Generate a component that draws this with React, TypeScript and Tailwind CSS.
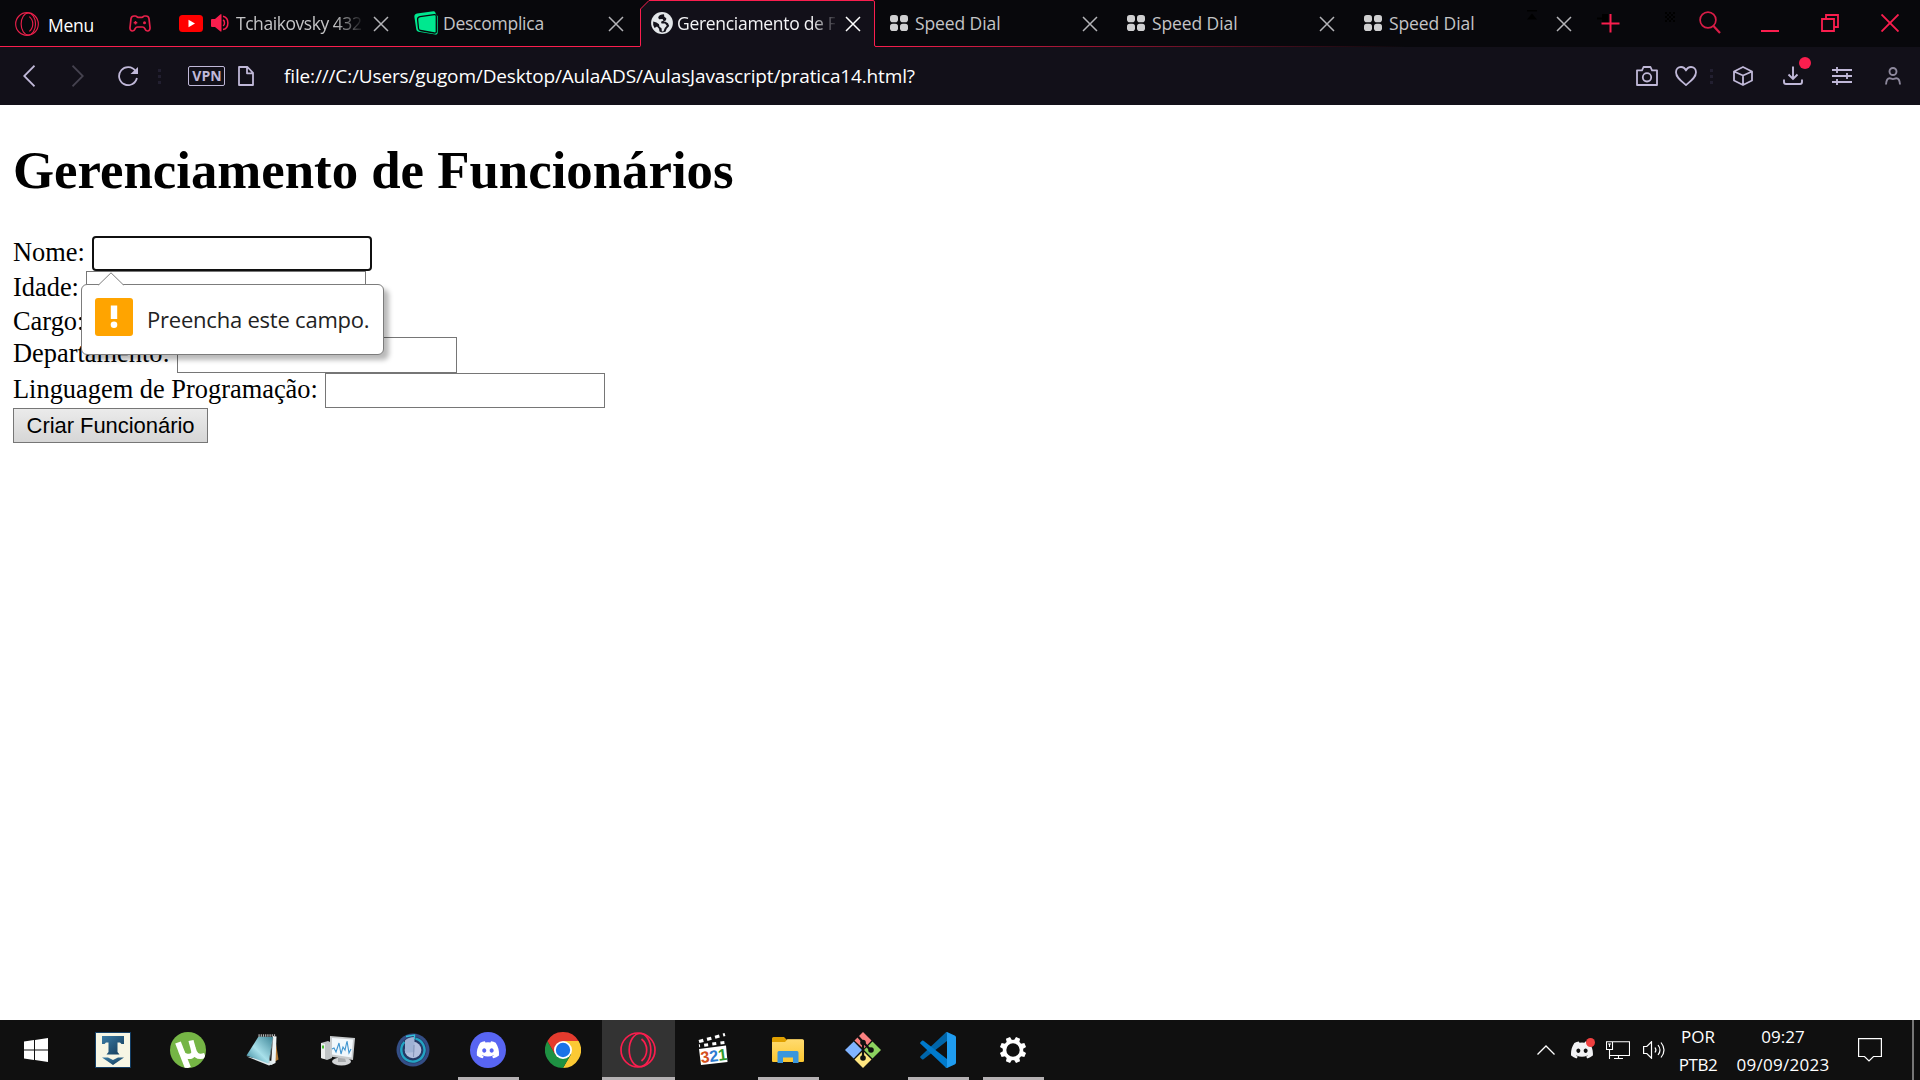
import React from "react";

type P = { className?: string };

const Cross = ({ className = "" }: P) => (
  <svg viewBox="0 0 16 16" className={`size-4 shrink-0 ${className}`} fill="none" stroke="currentColor" strokeWidth="1.5">
    <path d="M1 1 15 15M15 1 1 15" />
  </svg>
);

const OperaRings = ({ className = "" }: P) => (
  <svg viewBox="0 0 36 36" className={`shrink-0 ${className}`} fill="none" stroke="currentColor" strokeWidth="1.7">
    <circle cx="18" cy="18" r="17" />
    <ellipse cx="20" cy="18" rx="10.800" ry="16.500" />
    <path d="M21.500 7c3 2.500 5.200 6 5.200 11s-2.200 8.500-5.200 11" />
  </svg>
);

const Gamepad = () => (
  <svg viewBox="0 0 22 17" className="h-[17px] w-[22px] shrink-0" fill="none" stroke="#e8204a" strokeWidth="1.7" strokeLinejoin="round">
    <path d="M6.500 1 5 1C3.300 1 2.300 2 2 3.600L1 12.500C.8 14.600 1.800 16 3.500 16 5 16 5.600 15 6.200 13.600 6.800 12.200 7.500 12 8.500 12h5c1 0 1.700.2 2.300 1.600C16.400 15 17 16 18.500 16c1.700 0 2.700-1.400 2.500-3.500L20 3.600C19.700 2 18.700 1 17 1h-1.500C14.200 1 14.200 2.300 13 2.300H9C7.800 2.300 7.800 1 6.500 1Z" />
    <circle cx="15.500" cy="7.800" r="1.500" fill="#e8204a" stroke="none" />
    <path d="M6.500 6v3.600M4.700 7.800h3.600" strokeWidth="1.500" />
  </svg>
);

const YouTube = () => (
  <svg viewBox="0 0 24 17" className="h-[17px] w-6 shrink-0">
    <rect width="24" height="17" rx="3.500" fill="#f00" />
    <path d="M9.500 4.800 16 8.500 9.500 12.200Z" fill="#fff" />
  </svg>
);

const TabSpeaker = () => (
  <svg viewBox="0 0 18 18" className="ml-2 size-[18px] shrink-0" fill="none" stroke="#fa1e4e" strokeWidth="1.500">
    <path d="M0 6q0-1 1-1H4L9.500.3h1V17.500h-1L4 13H1q-1 0-1-1Z" fill="#fa1e4e" stroke="none" />
    <path d="M12 6c2 1 2 4.800 0 5.800M12 2.300c6.500 1.500 6.500 11.700 0 13.200" />
  </svg>
);

const Descomplica = () => (
  <svg viewBox="0 0 24 24" className="size-6 shrink-0">
    <path d="M3 2.500 19.500.2Q21.300 0 21.500 2L22 3.500 23.700 5V21.500Q23.700 24 21.300 23.600L4.500 20.800Q2.600 20.500 2.300 18.500L.4 6Q0 3 3 2.500Z" fill="#00e88f" />
    <path d="M6 5.700 20.300 3.600Q22.300 3.400 22.300 5.400V20.400Q22.300 22.400 20.300 22L6.500 19.500Q4.700 19.200 4.500 17.500L3.600 8.500Q3.400 6.200 6 5.700Z" fill="none" stroke="#08080c" strokeWidth="1.300" />
  </svg>
);

const Globe = () => (
  <svg viewBox="0 0 22 22" className="size-[22px] shrink-0">
    <circle cx="11" cy="11" r="10.900" fill="#e4e7ea" />
    <path d="M13 2.300C10 2.300 7.800 3.500 7.200 5.500L8 7.300 11.500 7l1 1.500-2.500 1.300.5 1.600 3.500.2 1.800 2.100-2 2.300-1.300 3.300-1.600.2-.4-3.200-2-1.500-.5-2.600L5.500 10.500 2.200 9.500Q1.500 13 3.500 16L6 14.500l2 2.200.5 2.900 2.500.8 3.500-.7 1.200-3 2.500-2.700L17 11.300l-2.500-1.500-2-.3 2.500-1.200.3-2-2-1.500Z" fill="#14131c" />
  </svg>
);

const Dial = () => (
  <svg viewBox="0 0 18 16" className="h-4 w-[18px] shrink-0" fill="#cfcfd1">
    <rect width="8" height="7.200" rx="2.800" />
    <rect x="10" width="8" height="7.200" rx="2.800" />
    <rect y="8.800" width="8" height="7.200" rx="2.800" />
    <rect x="10" y="8.800" width="8" height="7.200" rx="2.800" />
  </svg>
);

const Dots = ({ className = "" }: P) => (
  <div className={`flex w-[3px] shrink-0 flex-col gap-[3px] ${className}`}>
    <i className="size-[3px] bg-[#221f30]" />
    <i className="size-[3px] bg-[#221f30]" />
    <i className="size-[3px] bg-[#221f30]" />
  </div>
);

function SpeedDialTab({ faint }: { faint?: boolean }) {
  return (
    <div className="flex h-[46px] w-[237px] shrink-0 items-center">
      <Dial />
      <span className="ml-[7px] w-[88px] leading-[46px] tracking-[-0.1px] whitespace-nowrap">Speed Dial</span>
      <div className="flex w-[79px] justify-end pr-[19px] pb-4">
        {faint && (
          <svg viewBox="0 0 10 10" className="size-[10px]"><path d="M0 0h10v1.500H0ZM0 9.500 5 3.500l5 6Z" fill="#000" /></svg>
        )}
      </div>
      <Cross className="mt-[2px] text-[#b4b4b8]" />
    </div>
  );
}

function TabBar() {
  return (
    <header className="relative flex h-[47px] bg-[#08080c] font-['Open_Sans',sans-serif] text-[17.5px] text-[#c4c4c6]">
      <div className="absolute bottom-0 left-0 h-px w-[1450px] bg-linear-to-r from-[#fa1e4e] from-60% to-transparent to-97%" />
      <div className="flex h-[46px] w-[179px] shrink-0 items-center pl-[15px]">
        <OperaRings className="mt-[2px] size-6 text-[#e8204a]" />
        <span className="ml-[9px] w-[81px] pt-[3px] leading-[46px] tracking-[-0.3px] text-white">Menu</span>
        <Gamepad />
      </div>
      <div className="flex h-[46px] w-[235px] shrink-0 items-center">
        <YouTube />
        <TabSpeaker />
        <span className="ml-[7px] w-[130px] leading-[46px] tracking-[-0.45px] whitespace-nowrap [mask-image:linear-gradient(to_right,black_76%,transparent_99%)]">Tchaikovsky 432</span>
        <Cross className="mt-[2px] ml-[7px] text-[#b4b4b8]" />
      </div>
      <div className="flex h-[46px] w-[226px] shrink-0 items-center">
        <Descomplica />
        <span className="ml-[5px] w-[165px] leading-[46px] tracking-[-0.25px]">Descomplica</span>
        <Cross className="mt-[2px] text-[#b4b4b8]" />
      </div>
      <div className="relative h-[47px] w-[250px] shrink-0">
        <svg viewBox="0 0 236 47" className="absolute top-0 left-0 h-[47px] w-[236px]">
          <path d="M0 47Q.5 46.500.5 45V9L9 .5H233Q234.500.5 234.500 2V45L236 47Z" fill="#121019" />
          <path d="M-1 46.500Q.5 46.500.5 45V9L9 .5H233Q234.500.5 234.500 2V45Q234.500 46.500 236 46.500" fill="none" stroke="#fa1e4e" />
        </svg>
        <div className="relative flex h-[46px] items-center pl-[11px]">
          <Globe />
          <span className="ml-1 w-[158px] leading-[46px] tracking-[-0.3px] whitespace-nowrap text-[#f4f4f6] [mask-image:linear-gradient(to_right,black_85%,transparent_102%)]">Gerenciamento de F</span>
          <Cross className="mt-[2px] ml-[10px] text-white" />
        </div>
      </div>
      <SpeedDialTab />
      <SpeedDialTab />
      <SpeedDialTab faint />
      <div className="ml-[-5px] flex h-[46px] flex-1 items-center text-[#fa1e4e]">
        <svg viewBox="0 0 24 20" className="h-5 w-6 shrink-0" fill="none">
          <path d="M1 4.500h5V1h6v9H6V6.500H1Z" fill="#000" />
          <path d="M15 1.500V20M6 11h18" stroke="currentColor" strokeWidth="2" transform="translate(-.5 -.5)" />
        </svg>
        <svg viewBox="0 0 10 10" className="mt-[-13px] ml-[45px] size-[10px] shrink-0" fill="#000">
          <path d="M0 0h2v2H0ZM4 0h2v2H4ZM8 0h2v2H8ZM2 2h2v2H2ZM6 2h2v2H6ZM0 4h2v2H0ZM4 4h2v2H4ZM8 4h2v2H8ZM2 6h2v2H2ZM6 6h2v2H6ZM0 8h2v2H0ZM4 8h2v2H4ZM8 8h2v2H8Z" />
        </svg>
        <svg viewBox="0 0 22 23" className="mt-[-2px] ml-6 h-[23px] w-[22px] shrink-0" fill="none" stroke="#d81d47" strokeWidth="1.700">
          <circle cx="9" cy="9" r="7.900" />
          <path d="M14.500 15 21 22" strokeWidth="2.200" />
        </svg>
        <i className="mt-[16px] ml-10 h-[2px] w-[18px] bg-current" />
        <svg viewBox="0 0 18 18" className="ml-[42px] size-[18px] shrink-0" fill="none" stroke="currentColor" strokeWidth="1.800">
          <path d="M1 5h12v12H1ZM5 5V1h12v12h-4" />
        </svg>
        <svg viewBox="0 0 18 18" className="ml-[42px] size-[18px] shrink-0" fill="none" stroke="currentColor" strokeWidth="1.900">
          <path d="M.5.500 17.500 17.500M17.500.500.500 17.500" />
        </svg>
      </div>
    </header>
  );
}

function AddressBar() {
  return (
    <nav className="flex h-[58px] items-center bg-[#121019] text-[#c0b8d8]">
      <svg viewBox="0 0 12 22" className="ml-[23px] h-[22px] w-3 shrink-0" fill="none" stroke="currentColor" strokeWidth="1.800"><path d="M11.500.7 1.200 11l10.300 10.300" /></svg>
      <svg viewBox="0 0 12 22" className="ml-[37px] h-[22px] w-3 shrink-0" fill="none" stroke="#45424f" strokeWidth="1.800"><path d="M.5.7 10.800 11 .5 21.300" /></svg>
      <svg viewBox="0 0 20 20" className="ml-[34px] size-5 shrink-0" fill="none" stroke="currentColor" strokeWidth="1.800">
        <path d="M17.500 5A9 9 0 1 0 18.900 12" />
        <path d="M20 1v7h-7.500Z" fill="currentColor" stroke="none" />
      </svg>
      <Dots className="ml-5" />
      <div className="ml-[27px] flex h-5 w-[37px] shrink-0 items-center justify-center rounded-[2px] border border-[#c0b8d8] pl-px font-['Open_Sans',sans-serif] text-[14px] leading-none font-bold">VPN</div>
      <svg viewBox="0 0 16 20" className="ml-[13px] h-5 w-4 shrink-0" fill="none" stroke="currentColor" strokeWidth="1.800" strokeLinejoin="round">
        <path d="M1 1h8.500L15 6.800V19H1ZM9 1v6.300h6" />
      </svg>
      <span className="ml-[30px] w-[1352px] font-['Open_Sans',sans-serif] text-[19px] leading-[58px] tracking-[-0.15px] whitespace-nowrap text-white">file:///C:/Users/gugom/Desktop/AulaADS/AulasJavascript/pratica14.html?</span>
      <svg viewBox="0 0 22 20" className="h-5 w-[22px] shrink-0" fill="none" stroke="currentColor" strokeWidth="1.800" strokeLinejoin="round">
        <path d="M1 4.300h5L7.500 1h7L16 4.300h5V19H1Z" />
        <circle cx="11" cy="11.300" r="4.200" />
      </svg>
      <svg viewBox="0 0 22 20" className="ml-[17px] h-5 w-[22px] shrink-0" fill="none" stroke="currentColor" strokeWidth="1.800" strokeLinejoin="round">
        <path d="M11 19C6 14.800 1 11.500 1 6.300 1 3.200 3.200 1 6 1c2.200 0 4 1.200 5 3.500C12 2.200 13.800 1 16 1c2.800 0 5 2.200 5 5.300C21 11.500 16 14.800 11 19Z" />
      </svg>
      <Dots className="ml-[13px]" />
      <svg viewBox="0 0 20 20" className="ml-5 size-5 shrink-0" fill="none" stroke="currentColor" strokeWidth="1.800" strokeLinejoin="round">
        <path d="M10 1 19 5.500v9L10 19l-9-4.500v-9ZM1 5.500l9 4 9-4M10 9.500V19" />
      </svg>
      <div className="relative ml-[30px] h-5 w-5 shrink-0">
        <svg viewBox="0 0 20 20" className="size-5" fill="none" stroke="currentColor" strokeWidth="1.900">
          <path d="M10 .5v12M5.500 8.500 10 13l4.500-4.500M1 13.500V16q0 2 2 2h14q2 0 2-2v-2.500" />
        </svg>
        <i className="absolute top-[-9px] right-[-8px] size-3 rounded-full bg-[#fa1e4e]" />
      </div>
      <svg viewBox="0 0 20 18" className="ml-[29px] h-[18px] w-5 shrink-0" fill="none" stroke="currentColor" strokeWidth="1.800">
        <path d="M0 3h20M0 9h20M0 15h20M5 0v6M15 6v6M5 12v6" />
      </svg>
      <svg viewBox="0 0 16 18" className="ml-[33px] h-[18px] w-4 shrink-0" fill="none" stroke="#8d889c" strokeWidth="1.900">
        <circle cx="8" cy="4.500" r="3.500" />
        <path d="M1 17.500c.3-4.500 2-6.200 3.700-6.200 1.300 0 1.800.8 3.300.8s2-.8 3.300-.8c1.700 0 3.400 1.700 3.700 6.200" />
      </svg>
    </nav>
  );
}

function Page() {
  const field = "shrink-0 w-[280px] border border-[#767676] bg-white";
  return (
    <main className="h-[915px] bg-white pl-[13px] font-['Liberation_Serif',serif] text-[26.4px] leading-[33.4px] text-black">
      <h1 className="pt-[35px] text-[52.8px] leading-[60px] font-bold">Gerenciamento de Funcionários</h1>
      <form className="relative pt-9">
        <div className="flex h-[35px]">
          <label className="w-[79px]">Nome:</label>
          <div className="h-[35px] w-[280px] rounded-[4px] border-2 border-[#101010] bg-white" />
        </div>
        <div className="flex h-[35px]">
          <label className="w-[73px]">Idade:</label>
          <div className={`h-[35px] ${field}`} />
        </div>
        <div className="flex h-[31px]">
          <label className="w-[76px] leading-[31px]">Cargo:</label>
          <div className={`h-[31px] ${field}`} />
        </div>
        <div className="flex h-9">
          <label className="w-[164px]">Departamento:</label>
          <div className={`h-9 ${field}`} />
        </div>
        <div className="flex h-[35px]">
          <label className="w-[312px]">Linguagem de Programação:</label>
          <div className={`h-[35px] ${field}`} />
        </div>
        <button type="button" className="block h-[35px] w-[195px] border border-[#767676] bg-linear-to-b from-[#ebebeb] to-[#d6d6d6] text-center font-['Liberation_Sans',sans-serif] text-[22px] leading-[33px] tracking-[-0.05px] whitespace-nowrap">Criar Funcionário</button>

        <div className="absolute top-[84px] left-[68px] flex h-[71px] w-[303px] items-start rounded-md border border-[#7c7c7c] bg-white pt-[13px] pl-[13px] shadow-[5px_5px_5px_rgba(0,0,0,0.28)]">
          <svg viewBox="0 0 26 14" className="absolute top-[-13px] left-[16px] h-[14px] w-[26px]">
            <path d="M.5 13 13 .800 25.500 13V14H.5Z" fill="#fff" />
            <path d="M.5 13 13 .800 25.500 13" fill="none" stroke="#7c7c7c" />
          </svg>
          <svg viewBox="0 0 38 38" className="size-[38px] shrink-0">
            <rect width="38" height="38" rx="3" fill="#ffa400" />
            <rect x="15.800" y="7.500" width="6.400" height="13.500" fill="#fff" />
            <circle cx="19" cy="26.800" r="3.300" fill="#fff" />
          </svg>
          <span className="ml-[14px] font-['Open_Sans',sans-serif] text-[22px] leading-[42px] tracking-[-0.22px] whitespace-nowrap text-[#222]">Preencha este campo.</span>
        </div>
      </form>
    </main>
  );
}

const Transmission = () => (
  <svg viewBox="0 0 36 36" className="size-9">
    <defs><linearGradient id="tg" x1="0" x2="1" y1="0" y2="1"><stop offset="0" stopColor="#3c7da6" /><stop offset="1" stopColor="#123a58" /></linearGradient></defs>
    <rect x=".5" y=".5" width="35" height="35" fill="#f7f6e4" stroke="#143f66" />
    <path d="M7 4h22v8h-2.500l-1.500-1.500h-2.500V20l2 2.500H11.500l2-2.500V10.500H11L9.500 12H7Z" fill="url(#tg)" />
    <path d="M7 25.500h6l5 2.500 5-2.500h6L18 33Z" fill="url(#tg)" />
  </svg>
);

const UTorrent = () => (
  <svg viewBox="0 0 36 36" className="size-9">
    <clipPath id="utc"><circle cx="18" cy="18" r="18" /></clipPath>
    <circle cx="18" cy="18" r="18" fill="#75b545" />
    <g clipPath="url(#utc)" fill="none" stroke="#fff">
      <path d="M8 10.500 18 36" strokeWidth="6" />
      <path d="M11 19c2 6 10 7 12.500 3 1.200-2.500-1-7-2.500-13.500M23 16c1.500 6 4 10.500 12 7.500" strokeWidth="5.200" />
    </g>
  </svg>
);

const Notepad = () => (
  <svg viewBox="0 0 36 36" className="size-9">
    <defs><linearGradient id="ng" x1="0" x2="1" y1="1" y2="0"><stop offset="0" stopColor="#2c7d94" /><stop offset=".45" stopColor="#a8e0ea" /><stop offset="1" stopColor="#3d8597" /></linearGradient></defs>
    <path d="m30 5 3.500 22.500-5.500 3Z" fill="#b57b35" />
    <path d="m28 4 3.500.500L30.500 31 26 33Z" fill="#eef3f4" />
    <path d="M1.500 24.500 24 33.500l4-1.500-1-3Z" fill="#dfe9eb" />
    <path d="M1.500 23.500 13.500 4.500l14.500.500L23.500 31.500Z" fill="url(#ng)" />
    <path d="m28 6-4 25" stroke="#9db4ba" strokeWidth=".6" />
    <path d="M13.500 3.500H31" stroke="#b8b8b8" strokeWidth="2.500" strokeDasharray="1.200 1" />
  </svg>
);

const Monitor = () => (
  <svg viewBox="0 0 36 36" className="size-9">
    <path d="m1 11 7-2 4 2v15l-5 2-6-2Z" fill="#bfc3c5" />
    <path d="m1 11 4 1v15l-4-1Z" fill="#eceeee" />
    <rect x="2" y="13.500" width="2" height="3" fill="#47c030" />
    <ellipse cx="21.500" cy="29.500" rx="9.500" ry="4" fill="#d3d5d7" />
    <path d="m18 25 7 1 1 4h-8Z" fill="#a8abad" />
    <path d="m10 4 25 2-2 22L10 24.500Z" fill="#c8cbcd" />
    <path d="m12 6 21 1.500-1.500 18L12 22.500Z" fill="#f2f8fc" />
    <path d="m12 17 2-1 2 4 3-9 2 11 2-7 2 3 2-9 2 12 2-4" fill="none" stroke="#3f94cf" strokeWidth="1.100" />
  </svg>
);

const BlueOrb = () => (
  <svg viewBox="0 0 36 36" className="size-9">
    <circle cx="18" cy="18" r="16.500" fill="#344e86" />
    <circle cx="18" cy="18" r="13.500" fill="#253a66" />
    <path d="M20.500 6.700A11.600 11.600 0 1 1 9.500 10" fill="none" stroke="#23a5c4" strokeWidth="2.400" />
    <circle cx="18" cy="18" r="8.300" fill="#b4c0de" />
    <path d="M10 21V8.500Q13 5 19.500 5V20Z" fill="#9fb2d4" />
    <path d="M11 4.500 19.500 3v4" fill="none" stroke="#2fc1db" strokeWidth="1.400" />
    <path d="m19 13-.500 12" stroke="#8595b8" />
  </svg>
);

const DISCORD = "M20.317 4.370a19.800 19.800 0 0 0-4.885-1.515.074.074 0 0 0-.079.037c-.210.375-.444.864-.608 1.250a18.300 18.300 0 0 0-5.487 0 12.600 12.600 0 0 0-.617-1.250.077.077 0 0 0-.079-.037A19.700 19.700 0 0 0 3.677 4.370C.533 9.046-.320 13.580.099 18.058a.082.082 0 0 0 .031.057 19.900 19.900 0 0 0 5.993 3.030.078.078 0 0 0 .084-.028 14 14 0 0 0 1.226-1.994 13 13 0 0 1-1.872-.892l.372-.292c3.928 1.793 8.180 1.793 12.062 0l.373.292a12.300 12.300 0 0 1-1.873.892c.360.698.772 1.362 1.225 1.993a.076.076 0 0 0 .084.028 19.800 19.800 0 0 0 6.033-3.057C24.300 12.900 23 8.600 20.317 4.370ZM8.020 15.330c-1.183 0-2.157-1.085-2.157-2.419s.956-2.419 2.157-2.419c1.210 0 2.176 1.096 2.157 2.420 0 1.333-.956 2.418-2.157 2.418Zm7.975 0c-1.183 0-2.157-1.085-2.157-2.419s.955-2.419 2.157-2.419c1.210 0 2.176 1.096 2.157 2.420 0 1.333-.946 2.418-2.157 2.418Z";

const Discord = () => (
  <svg viewBox="0 0 36 36" className="size-9">
    <circle cx="18" cy="18" r="18" fill="#5865f2" />
    <path d={DISCORD} fill="#fff" transform="translate(6.800 6.600) scale(.93)" />
  </svg>
);

const Chrome = () => (
  <svg viewBox="0 0 36 36" className="size-9">
    <path d="M18 9h15.590A18 18 0 0 1 18 36l7.800-13.500Z" fill="#fcc934" />
    <path d="M10.200 22.500 2.410 9A18 18 0 0 0 18 36l7.800-13.500Z" fill="#1e9142" />
    <path d="M2.410 9A18 18 0 0 1 33.590 9H18l-7.800 13.500Z" fill="#e33b2e" />
    <circle cx="18" cy="18" r="9" fill="#fff" />
    <circle cx="18" cy="18" r="7.200" fill="#1a73e8" />
  </svg>
);

const Clapper = () => (
  <svg viewBox="0 0 36 36" className="mr-[4px] size-9">
    <path d="m4 9 28-8 1 4L6 13Z" fill="#111" />
    <path d="M6 9.500 32 2.500" stroke="#fff" strokeWidth="3.200" strokeDasharray="4.500 3.800" />
    <path d="M6 13.800 32 10.500" stroke="#fff" strokeWidth="3" strokeDasharray="4 4.200" strokeDashoffset="3" />
    <path d="m6 17 27-3.500L34.500 30 8 33Z" fill="#fff" />
    <g fontFamily="Liberation Sans, sans-serif" fontWeight="bold" fontSize="16" transform="rotate(-7 20 24)">
      <text x="7.500" y="29.500" fill="#d5501c">3</text>
      <text x="16.300" y="29.500" fill="#2c7bd0">2</text>
      <text x="25" y="29.500" fill="#2f9a2c">1</text>
    </g>
  </svg>
);

const Folder = () => (
  <svg viewBox="0 0 36 36" className="size-9">
    <defs><linearGradient id="fg" x1="0" x2="0" y1="0" y2="1"><stop offset="0" stopColor="#ffdb70" /><stop offset="1" stopColor="#fcc72f" /></linearGradient></defs>
    <path d="M2 6.500Q2 5 3.500 5H14l2.500 2.500H32q1.500 0 1.500 1.500V12H2Z" fill="#e0a000" />
    <path d="M2 10h13l2.500-2.800H32.500q1.500 0 1.500 1.500V29q0 1-1.500 1H3q-1 0-1-1Z" fill="url(#fg)" />
    <path d="M7.500 31V20.500Q7.500 19 9 19H27q1.500 0 1.500 1.500V31H23v-5.500H13V31Z" fill="#3a96dd" />
  </svg>
);

const GitIcon = () => (
  <svg viewBox="0 0 36 36" className="size-9">
    <path d="M18 0 26.500 8.500 18.500 17 9.500 8.500Z" fill="#fa8080" />
    <path d="m8.700 9.500 8.300 8.500-8.300 8.500L0 18Z" fill="#80b3ff" />
    <path d="m27.500 9.500 8.500 8.500-8.500 8.500L19 18Z" fill="#8dd35f" />
    <path d="m18 19 8.500 8.500L18 36l-8.500-8.500Z" fill="#ffe680" />
    <path d="M13 4.500 18 10V26M18 10l7.500 8" fill="none" stroke="#111" strokeWidth="2.200" />
    <circle cx="18" cy="10.500" r="2.800" fill="#111" />
    <circle cx="26" cy="18" r="2.800" fill="#111" />
    <circle cx="18" cy="26" r="2.800" fill="#111" />
  </svg>
);

const VSCode = () => (
  <svg viewBox="0 0 36 36" className="size-9">
    <path d="M27 9 3.500 27.300q-.8.600-1.500 0L.5 25.800q-.800-.800 0-1.600L25.500.800q1-.900 2.300-.500Z" fill="#0065a9" />
    <path d="M27 27 3.500 8.700q-.8-.6-1.500 0L.5 10.200q-.800.800 0 1.600l25 23.400q1 .900 2.300.500Z" fill="#007acc" />
    <path d="M27.500 35.700q-1.500.500-2.500-.500 2 1 2-1.200V2q0-2.200-2-1.200 1-1 2.500-.500L34.700 3.500Q36 4.200 36 5.500v25q0 1.300-1.300 2Z" fill="#1f9cf0" />
  </svg>
);

const Gear = () => (
  <svg viewBox="0 0 28 28" className="size-7">
    <circle cx="14" cy="14" r="8.500" fill="none" stroke="#fff" strokeWidth="3.600" />
    <g fill="#fff">
      <path d="M11.800.8h4.400l.8 4.700h-6Z" transform="rotate(22.500 14 14)" />
      <path d="M11.800.8h4.400l.8 4.700h-6Z" transform="rotate(67.500 14 14)" />
      <path d="M11.800.8h4.400l.8 4.700h-6Z" transform="rotate(112.500 14 14)" />
      <path d="M11.800.8h4.400l.8 4.700h-6Z" transform="rotate(157.500 14 14)" />
      <path d="M11.800.8h4.400l.8 4.700h-6Z" transform="rotate(202.500 14 14)" />
      <path d="M11.800.8h4.400l.8 4.700h-6Z" transform="rotate(247.500 14 14)" />
      <path d="M11.800.8h4.400l.8 4.700h-6Z" transform="rotate(292.500 14 14)" />
      <path d="M11.800.8h4.400l.8 4.700h-6Z" transform="rotate(337.500 14 14)" />
    </g>
  </svg>
);

type TaskbarApp = { icon: React.ReactNode; open?: boolean; active?: boolean };
const apps: TaskbarApp[] = [
  { icon: <Transmission /> },
  { icon: <UTorrent /> },
  { icon: <Notepad /> },
  { icon: <Monitor /> },
  { icon: <BlueOrb /> },
  { icon: <Discord />, open: true },
  { icon: <Chrome /> },
  { icon: <OperaRings className="size-9 text-[#fa1e4e]" />, active: true },
  { icon: <Clapper /> },
  { icon: <Folder />, open: true },
  { icon: <GitIcon /> },
  { icon: <VSCode />, open: true },
  { icon: <Gear />, open: true },
];

function Taskbar() {
  return (
    <footer className="flex h-[60px] bg-[#101010] text-white">
      <div className="flex w-[75px] shrink-0 items-center pl-6">
        <svg viewBox="0 0 24 24" className="size-6" fill="#fff"><path d="M0 3.400 10 2v9.500H0ZM11 1.900 24 0v11.500H11ZM0 12.500h10V22L0 20.600ZM11 12.500h13V24L11 22.100Z" /></svg>
      </div>
      {apps.map((a, i) => (
        <div key={i} className="flex w-[75px] shrink-0 pl-[2px]">
          <div className={`relative flex w-[73px] items-center justify-center pr-px ${a.active ? "bg-[#333]" : ""}`}>
            {a.icon}
            {a.open && <i className="absolute bottom-0 left-[6px] h-[3px] w-[61px] bg-[#b5b1b3]" />}
            {a.active && <i className="absolute bottom-0 left-0 h-[3px] w-full bg-[#b5b1b3]" />}
          </div>
        </div>
      ))}
      <div className="ml-auto flex items-center font-['Open_Sans',sans-serif] text-[17px]">
        <svg viewBox="0 0 18 10" className="h-[10px] w-[18px]" fill="none" stroke="#fff" strokeWidth="1.300"><path d="M.5 9.500 9 1l8.500 8.500" /></svg>
        <div className="relative ml-4 h-[18px] w-[23px]">
          <svg viewBox="0 2.500 24 19" className="h-[18px] w-[22px]"><path d={DISCORD} fill="#f2f2f4" /></svg>
          <i className="absolute top-[-3px] right-[-1px] size-[9px] rounded-full bg-[#f04040]" />
        </div>
        <svg viewBox="0 0 24 18" className="ml-3 h-[18px] w-6" fill="none" stroke="#fff" strokeWidth="1.100">
          <path d="M7 .8h16.500V14.500H3.500V18M3.500 9v9M8 17.500h9M12.500 14.500v3M.5.800H6.500V8.500H.5ZM2 3h3M3.500 3v3" />
        </svg>
        <svg viewBox="0 0 23 18" className="ml-[13px] h-[18px] w-[23px]" fill="none" stroke="#fff" strokeWidth="1.200">
          <path d="M.6 5.500h3.200L8.500.800v16.400L3.800 12.500H.6Z" />
          <path d="M12 6.500q1.800 2.500 0 5M15 4q4 5 0 10" />
          <path d="M18 1.500q6 7.500 0 15" />
        </svg>
        <div className="ml-[12px] flex w-[40px] flex-col items-center text-center leading-[27px]">
          <span>POR</span>
          <span className="pt-px tracking-[-0.5px]">PTB2</span>
        </div>
        <div className="ml-[15px] flex w-[100px] flex-col items-center leading-[27px]">
          <span>09:27</span>
          <span className="pt-px tracking-[0.3px]">09/09/2023</span>
        </div>
        <svg viewBox="0 0 24 24" className="ml-[25px] h-6 w-6" fill="none" stroke="#fff" strokeWidth="1.200"><path d="M.6.600H23.400V18.500H15.500L11 23 6.500 18.500H.6Z" /></svg>
        <i className="mr-1.5 ml-[30px] h-[60px] w-[2px] bg-[#777]" />
      </div>
    </footer>
  );
}

export default function App() {
  return (
    <div className="flex h-[1080px] w-[1920px] flex-col overflow-hidden">
      <TabBar />
      <AddressBar />
      <Page />
      <Taskbar />
    </div>
  );
}
